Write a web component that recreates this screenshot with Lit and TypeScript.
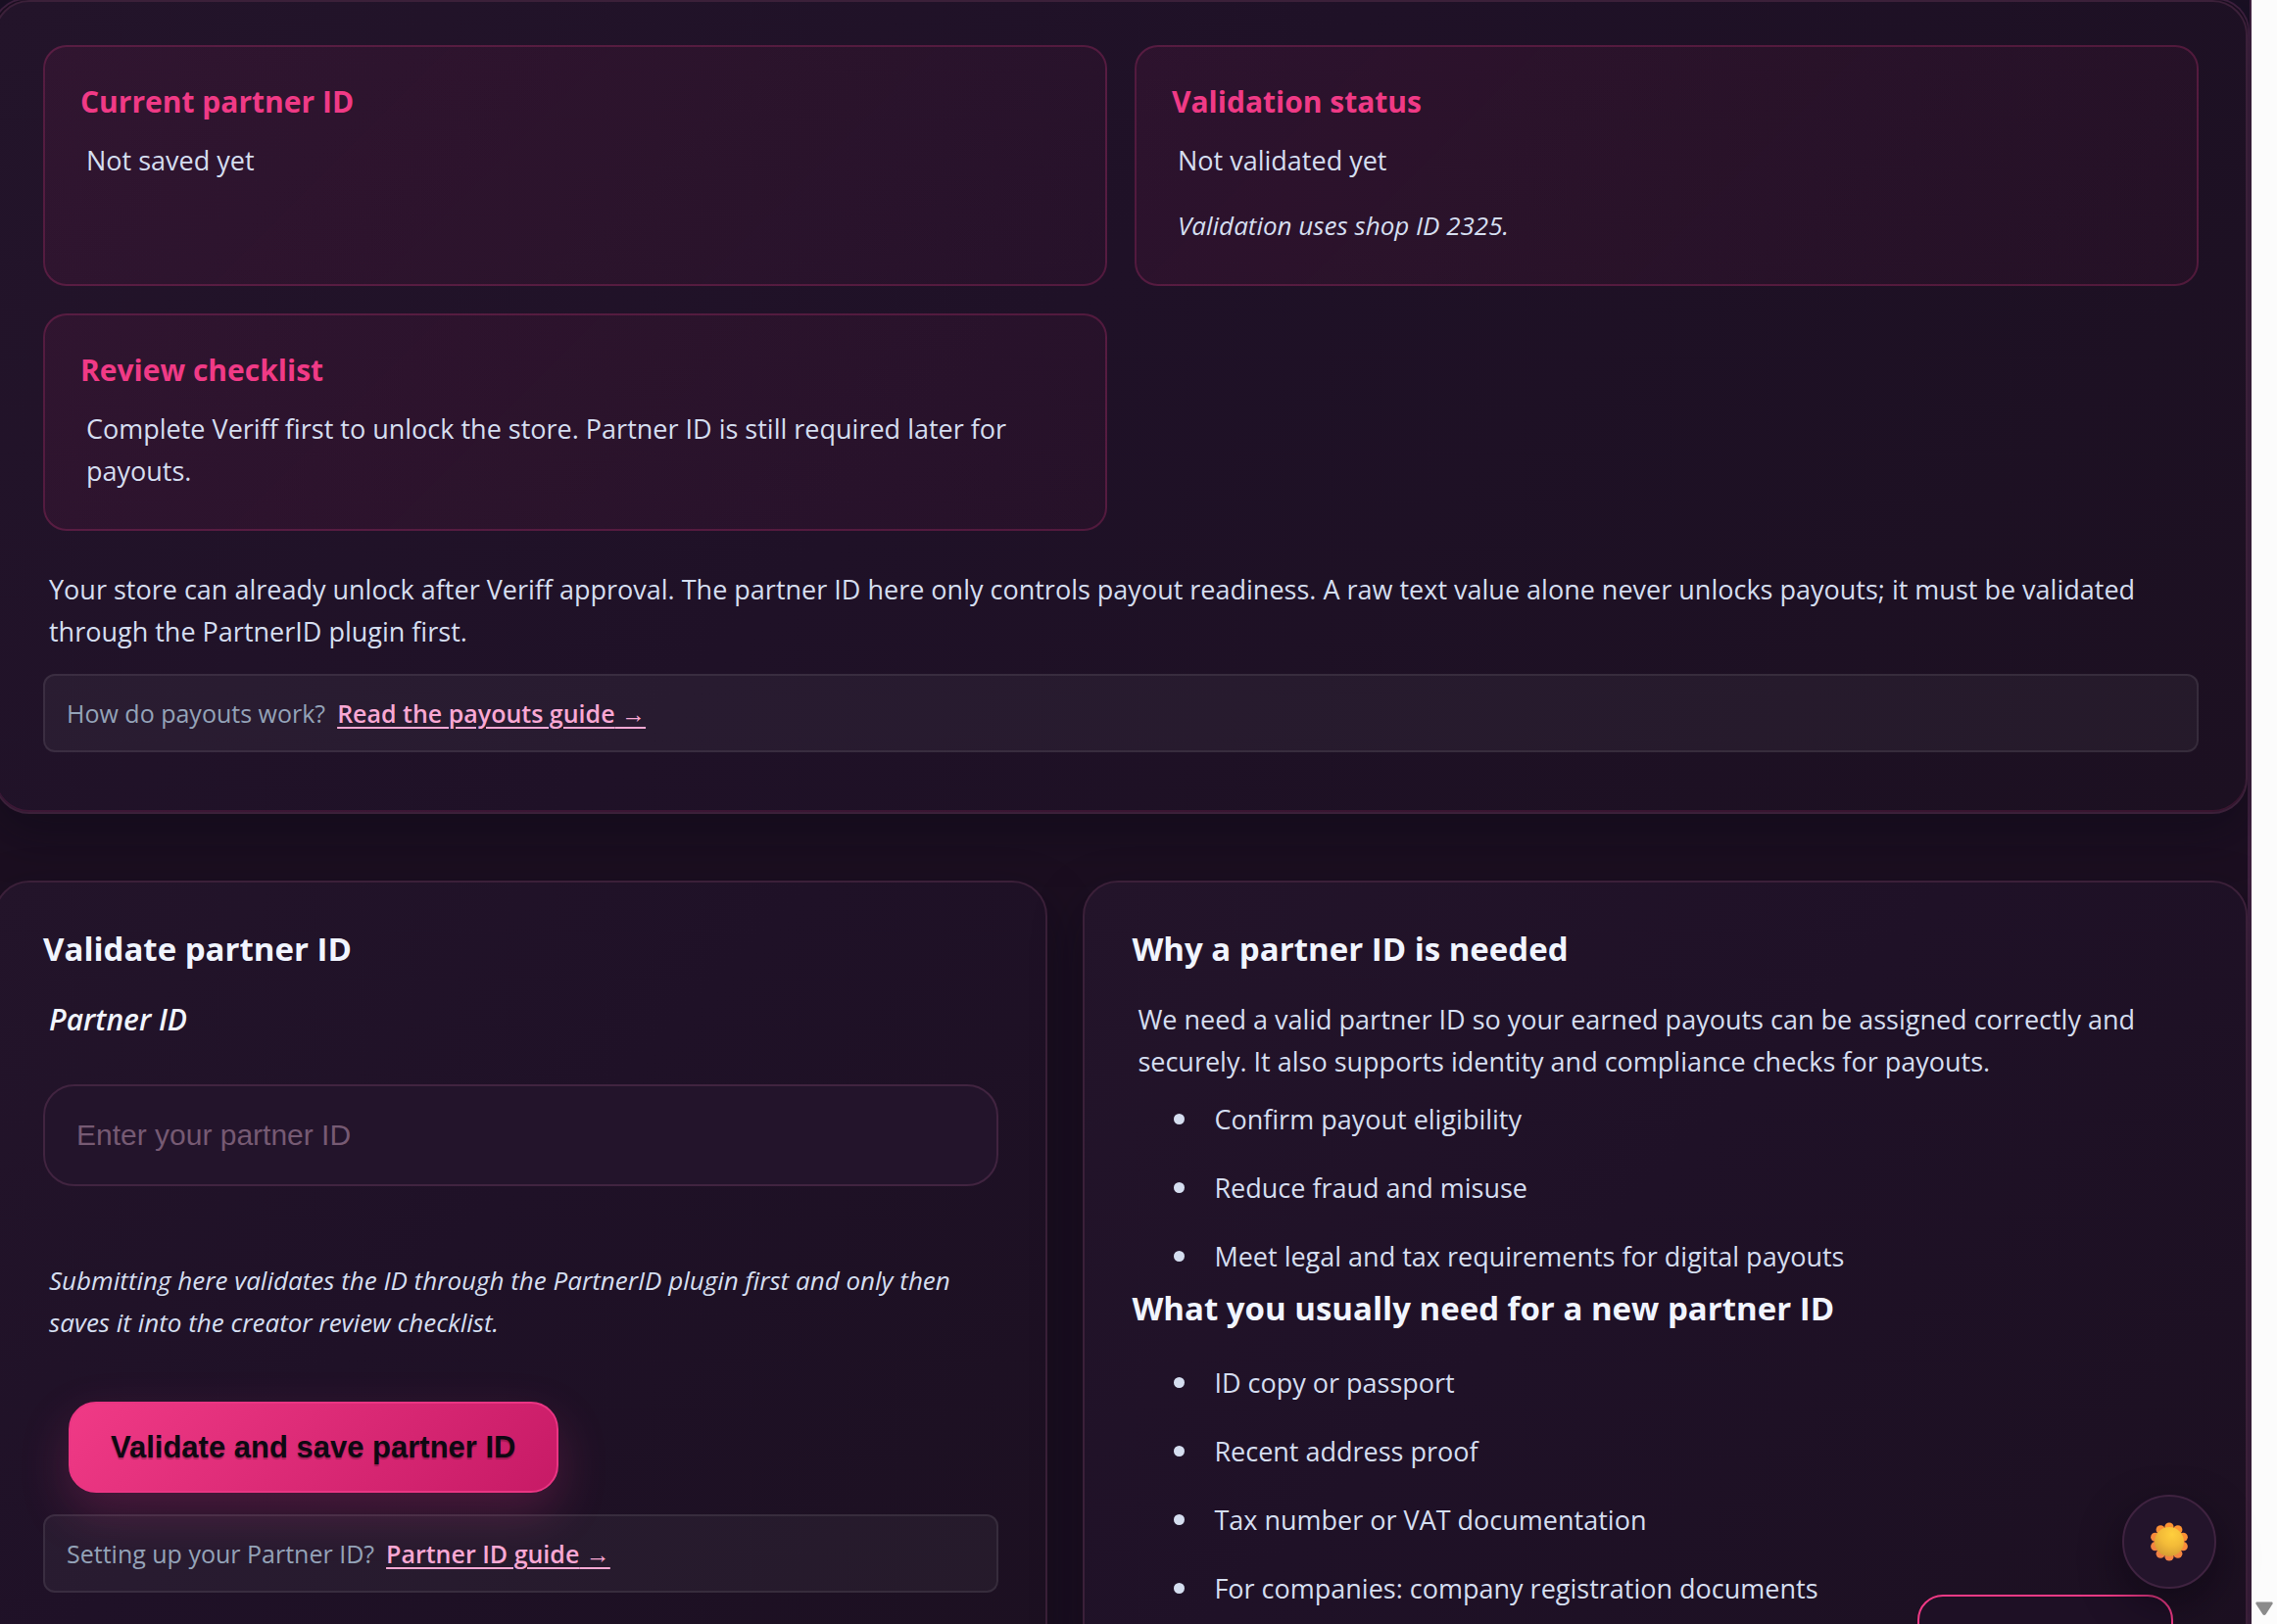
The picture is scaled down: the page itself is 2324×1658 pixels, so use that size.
import { LitElement, html, svg, css } from "lit";
import { customElement, property } from "lit/decorators.js";

@customElement("help-bar")
class HelpBar extends LitElement {
  @property() question = "";
  @property() label = "";

  static styles = css`
    .bar {
      display: flex;
      align-items: center;
      gap: 12px;
      margin: 22px 0 17px;
      padding: 18px 22px;
      border: 2px solid rgba(255, 255, 255, 0.08);
      border-radius: 12px;
      background: rgba(255, 255, 255, 0.045);
      color: #94a3b8;
      font-size: 25px;
      line-height: 40px;
    }
    .link {
      color: #f9a8d4;
      font-weight: 600;
      text-decoration: underline;
      text-decoration-thickness: 2px;
      text-underline-offset: 4px;
    }
  `;

  render() {
    return html`<div class="bar">
      <span>${this.question}</span>
      <a class="link" href="#guide">${this.label} →</a>
    </div>`;
  }
}

@customElement("status-card")
class StatusCard extends LitElement {
  @property() heading = "";
  @property() text = "";
  @property() note = "";

  static styles = css`
    :host {
      display: block;
      box-sizing: border-box;
      padding: 36px 36px 38px;
      border: 2px solid rgba(236, 60, 138, 0.22);
      border-radius: 24px;
      background: linear-gradient(135deg, rgba(236, 50, 130, 0.07), rgba(236, 40, 120, 0.04));
    }
    .heading {
      margin: 0 0 18px;
      color: #f03a86;
      font-size: 30px;
      font-weight: 700;
      line-height: 40px;
    }
    .text,
    .note {
      margin: 0;
      padding: 0 6px;
      font-size: 27px;
      line-height: 43px;
    }
    .note {
      margin-top: 24px;
      font-size: 26px;
      font-style: italic;
    }
  `;

  render() {
    return html`
      <h3 class="heading">${this.heading}</h3>
      <p class="text">${this.text}</p>
      ${this.note ? html`<p class="note">${this.note}</p>` : null}
    `;
  }
}

@customElement("app-root")
class AppRoot extends LitElement {
  static styles = css`
    :host {
      display: flex;
      position: relative;
      height: 100vh;
      overflow: hidden;
      background: #1a1024;
      color: #d5def0;
      font-family: "Open Sans", "Noto Sans", sans-serif;
    }
    *,
    *::before {
      box-sizing: border-box;
    }
    .page {
      flex: 1;
      min-width: 0;
      border-right: 2px solid #3f213f;
    }
    .panel {
      margin: -2px 0 0 -8px;
      border: 2px solid #3f213f;
      border-radius: 34px 34px 0 0;
      background: #1c0f21;
    }
    .card {
      padding: 44px 48px;
      border: 2px solid #3b2039;
      border-radius: 36px;
      background: linear-gradient(135deg, #23142a, #1f1127 45%, #1c1021);
      box-shadow: 0 20px 50px rgba(8, 8, 20, 0.4);
    }
    .overview {
      box-shadow: 0 20px 50px rgba(8, 8, 20, 0.4), inset 0 -2px 0 rgba(236, 60, 138, 0.14);
    }
    .statuses {
      display: grid;
      grid-template-columns: 1fr 1fr;
      gap: 28px;
    }
    .body,
    .hint {
      margin: 0;
      padding: 0 6px;
      font-size: 27px;
      line-height: 43px;
    }
    .overview .body {
      margin-top: 38px;
    }
    .columns {
      display: grid;
      grid-template-columns: 19fr 21fr;
      gap: 36px;
      margin-top: 68px;
    }
    .title {
      margin: 0 0 26px;
      color: #f1f5ff;
      font-size: 33px;
      font-weight: 700;
      line-height: 48px;
    }
    .form {
      display: flex;
      flex-direction: column;
    }
    .label {
      padding: 0 6px;
      color: #f1f5ff;
      font-size: 30px;
      font-style: italic;
      font-weight: 600;
      line-height: 43px;
    }
    .field {
      width: 100%;
      height: 104px;
      margin: 45px 0 75px;
      padding: 0 32px;
      border: 2px solid #412440;
      border-radius: 32px;
      outline: none;
      background: #23142b;
      color: #f1f5ff;
      font-family: "Liberation Sans", Arial, sans-serif;
      font-size: 30px;
    }
    .field::placeholder {
      color: #765a73;
      opacity: 1;
    }
    .hint {
      font-size: 26px;
      font-style: italic;
    }
    .submit {
      align-self: flex-start;
      height: 93px;
      margin: 59px 26px 0;
      padding: 0 41px;
      border: 2px solid #ea3583;
      border-radius: 28px;
      background: linear-gradient(135deg, #f03a86, #c71a66);
      box-shadow: 0 20px 50px rgba(236, 60, 138, 0.22);
      color: #0e0812;
      font-family: "Liberation Sans", Arial, sans-serif;
      font-size: 31px;
      font-weight: 700;
      text-shadow: 0 2px 1px rgba(0, 0, 0, 0.25);
    }
    .list {
      display: flex;
      flex-direction: column;
      gap: 27px;
      margin: 16px 0 8px;
      padding: 0 0 0 43px;
      list-style: none;
      font-size: 27px;
      line-height: 43px;
    }
    .title + .list {
      margin-top: 30px;
    }
    .item {
      display: flex;
      align-items: center;
      gap: 30px;
    }
    .item::before {
      content: "";
      width: 11px;
      height: 11px;
      border-radius: 50%;
      background: currentColor;
    }
    .scrollbar {
      display: flex;
      flex: 0 0 26px;
      align-items: flex-end;
      justify-content: center;
      padding-bottom: 8px;
      background: #fcfcfc;
    }
    .theme {
      position: absolute;
      right: 62px;
      bottom: 36px;
      display: grid;
      place-items: center;
      width: 96px;
      height: 96px;
      padding: 0;
      border: 2px solid #3f2340;
      border-radius: 50%;
      background: #23142b;
      box-shadow: 0 16px 40px rgba(8, 4, 14, 0.5);
    }
    .outline {
      position: absolute;
      right: 106px;
      bottom: -62px;
      width: 261px;
      height: 92px;
      border: 2px solid #f03a86;
      border-radius: 26px;
      background: #1e1025;
    }
  `;

  private list(items: string[]) {
    return html`<ul class="list">
      ${items.map((item) => html`<li class="item">${item}</li>`)}
    </ul>`;
  }

  private sun() {
    const petals = Array.from({ length: 10 }, (_, i) => (i * Math.PI) / 5);
    return html`<svg width="40" height="40" viewBox="-20 -20 40 40" aria-hidden="true">
      <defs>
        <radialGradient id="core" cx="0.6" cy="0.25" r="0.8">
          <stop offset="0" stop-color="#ffcf3d" />
          <stop offset="0.5" stop-color="#f3bb38" />
          <stop offset="1" stop-color="#d39a33" />
        </radialGradient>
        <linearGradient id="rays" gradientUnits="userSpaceOnUse" x1="-8" y1="20" x2="8" y2="-20">
          <stop offset="0" stop-color="#f07f48" />
          <stop offset="1" stop-color="#ff962e" />
        </linearGradient>
      </defs>
      <g fill="url(#rays)">
        ${petals.map(
          (a) => svg`<circle cx=${Math.sin(a) * 15} cy=${-Math.cos(a) * 15} r="4.6" />`,
        )}
      </g>
      <circle r="15" fill="url(#core)" />
    </svg>`;
  }

  render() {
    return html`
      <main class="page">
        <div class="panel">
          <section class="card overview">
            <div class="statuses">
              <status-card heading="Current partner ID" text="Not saved yet"></status-card>
              <status-card
                heading="Validation status"
                text="Not validated yet"
                note="Validation uses shop ID 2325."
              ></status-card>
              <status-card
                heading="Review checklist"
                text="Complete Veriff first to unlock the store. Partner ID is still required later for payouts."
              ></status-card>
            </div>
            <p class="body">
              Your store can already unlock after Veriff approval. The partner ID here only controls payout readiness. A
              raw text value alone never unlocks payouts; it must be validated through the PartnerID plugin first.
            </p>
            <help-bar question="How do payouts work?" label="Read the payouts guide"></help-bar>
          </section>
          <div class="columns">
            <form class="card form" @submit=${(e: Event) => e.preventDefault()}>
              <h2 class="title">Validate partner ID</h2>
              <label class="label" for="partner-id">Partner ID</label>
              <input class="field" id="partner-id" type="text" placeholder="Enter your partner ID" />
              <p class="hint">
                Submitting here validates the ID through the PartnerID plugin first and only then saves it into the
                creator review checklist.
              </p>
              <button class="submit" type="submit">Validate and save partner ID</button>
              <help-bar question="Setting up your Partner ID?" label="Partner ID guide"></help-bar>
            </form>
            <section class="card">
              <h2 class="title">Why a partner ID is needed</h2>
              <p class="body">
                We need a valid partner ID so your earned payouts can be assigned correctly and securely. It also
                supports identity and compliance checks for payouts.
              </p>
              ${this.list([
                "Confirm payout eligibility",
                "Reduce fraud and misuse",
                "Meet legal and tax requirements for digital payouts",
              ])}
              <h2 class="title">What you usually need for a new partner ID</h2>
              ${this.list([
                "ID copy or passport",
                "Recent address proof",
                "Tax number or VAT documentation",
                "For companies: company registration documents",
              ])}
            </section>
          </div>
        </div>
      </main>
      <div class="scrollbar">
        <svg width="18" height="15" viewBox="0 0 18 15" aria-hidden="true">
          <path d="M1.5 0.5h15q1.5 0 1 2L11 12.5q-2 3-4 0L0.5 2.5q-0.5-2 1-2z" fill="#8b8b8b" />
        </svg>
      </div>
      <button class="outline" type="button" aria-label="Open"></button>
      <button class="theme" type="button" aria-label="Toggle theme">${this.sun()}</button>
    `;
  }
}
